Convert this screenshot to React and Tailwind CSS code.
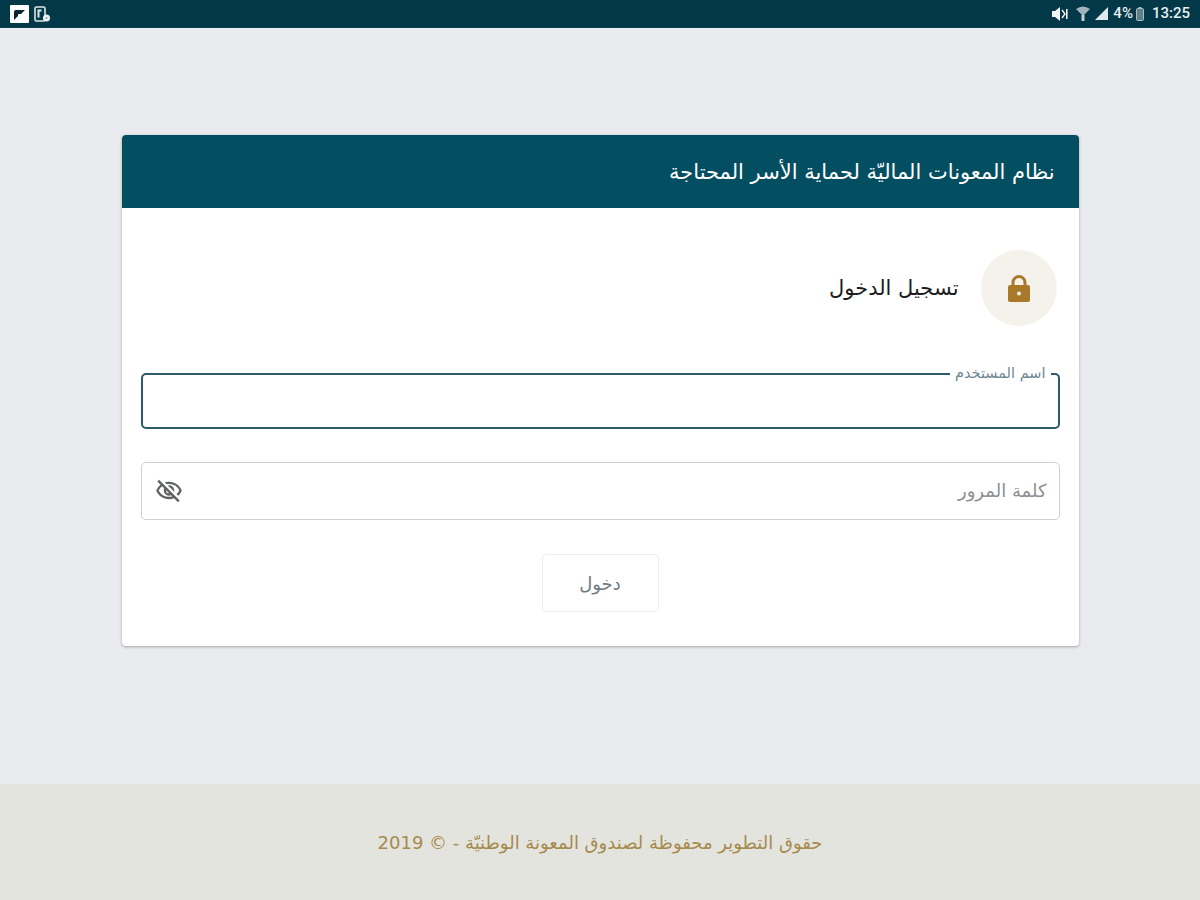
import React from 'react';
import { MdOutlineVisibilityOff } from 'react-icons/md';

const arabicFont = { fontFamily: '"DejaVu Sans", "Noto Sans", sans-serif' };

const StatusBar = () => (
    <div className="h-[28px] bg-[#023847] flex items-center justify-between pl-[10px] pr-[10px] border-b border-[#0b4050] shrink-0">
        <div className="flex items-center gap-[5px]">
            <svg width="19" height="18" viewBox="0 0 19 18">
                <rect width="19" height="18" rx="1" fill="#fff" />
                <path d="M4 15V7q0-2 2-2h9l-4 4H9q-1 0-1 1v1z" fill="#0b2530" />
            </svg>
            <svg width="17" height="18" viewBox="0 0 17 18" fill="none">
                <rect x="1" y="2" width="10" height="14" rx="1.5" stroke="#dfe8ea" strokeWidth="1.6" />
                <path d="M3.5 4.5h4v2h-2v6h-2z" fill="#dfe8ea" />
                <circle cx="12.5" cy="13" r="3.5" fill="#eef3f4" />
                <circle cx="12.5" cy="13" r="1" fill="#7f9aa1" />
            </svg>
        </div>
        <div className="flex items-center text-[#e8eff1] text-[15px] font-medium font-['Roboto',sans-serif] leading-none">
            <svg width="16" height="14" viewBox="0 0 16 14" className="mr-[8px]">
                <path d="M0 4h3l5-4v14l-5-4H0z" fill="#f2f6f7" />
                <path d="M10 3l3 4-3 4" stroke="#f2f6f7" strokeWidth="1.4" fill="none" />
                <path d="M14 2h1.6v10H14z" fill="#f2f6f7" />
            </svg>
            <svg width="14" height="16" viewBox="0 0 14 16" className="mr-[5px]">
                <path d="M0 3q7-5 14 0L7 10z" fill="#9fb4ba" />
                <path d="M5.5 9h3v6h-3z" fill="#c3d0d4" />
            </svg>
            <svg width="14" height="13" viewBox="0 0 14 13" className="mr-[4px]">
                <path d="M0 13L13 0v13z" fill="#dfe8ea" />
            </svg>
            <span className="mr-[3px]">4%</span>
            <svg width="8" height="14" viewBox="0 0 8 14" className="mr-[8px]">
                <rect x="0.5" y="1.5" width="7" height="12" rx="1" fill="#5f8088" stroke="#a9bcc1" />
                <rect x="2.5" y="0" width="3" height="2" fill="#a9bcc1" />
            </svg>
            <span>13:25</span>
        </div>
    </div>
);

const LoginCard = () => (
    <div dir="rtl" className="w-[957px] h-[511px] bg-white rounded-[4px] shadow-[0_1px_3px_rgba(0,0,0,0.3)] overflow-hidden">
        <div className="h-[73px] bg-[#044e61] flex items-center px-[24px]">
            <h1 className="text-white text-[21px] leading-[30px] font-medium" style={arabicFont}>نظام المعونات الماليّة لحماية الأسر المحتاجة</h1>
        </div>
        <div className="px-[19px]">
            <div className="flex items-center pt-[42px] pr-[3px]">
                <div className="w-[76px] h-[76px] rounded-full bg-[#f4f2ea] flex items-center justify-center">
                    <svg width="22" height="27" viewBox="0 0 22 27">
                        <path d="M5 12V7.5a6 6 0 0 1 12 0V12" fill="none" stroke="#a8792a" strokeWidth="3" />
                        <rect y="10" width="22" height="17" rx="2" fill="#a8792a" />
                        <circle cx="11" cy="18.5" r="2" fill="#f4f2ea" />
                    </svg>
                </div>
                <span className="mr-[22px] text-[21px] leading-[30px] text-[#1c1c1c]" style={arabicFont}>تسجيل الدخول</span>
            </div>
            <div className="relative mt-[47px] h-[56px] rounded-[5px] border-2 border-[#2f5a6c]">
                <span className="absolute -top-[10px] right-[7px] bg-white px-[5px] text-[14.5px] leading-[16px] text-[#6d8791]" style={arabicFont}>اسم المستخدم</span>
            </div>
            <div className="mt-[33px] h-[58px] rounded-[5px] border border-[#cfd1d3] flex items-center justify-between pr-[12px] pl-[13px]">
                <span className="text-[18px] leading-[24px] text-[#8e9091]" style={arabicFont}>كلمة المرور</span>
                <MdOutlineVisibilityOff size={28} color="#5f6163" />
            </div>
            <div className="flex justify-center mt-[34px]">
                <button type="button" className="w-[117px] h-[58px] rounded-[4px] border border-[#eeeeee] bg-white text-[18px] text-[#6f7a80]" style={arabicFont}>دخول</button>
            </div>
        </div>
    </div>
);

const App = () => (
    <div className="w-[1200px] h-[900px] flex flex-col overflow-hidden bg-[#e9ebef]">
        <StatusBar />
        <main className="flex-1 flex justify-center pt-[107px]">
            <LoginCard />
        </main>
        <footer dir="rtl" className="h-[116px] bg-[#e4e4de] flex items-center justify-center shrink-0">
            <p className="text-[18px] text-[#a68a4e]" style={arabicFont}>حقوق التطوير محفوظة لصندوق المعونة الوطنيّة - © 2019</p>
        </footer>
    </div>
);

export default App;
